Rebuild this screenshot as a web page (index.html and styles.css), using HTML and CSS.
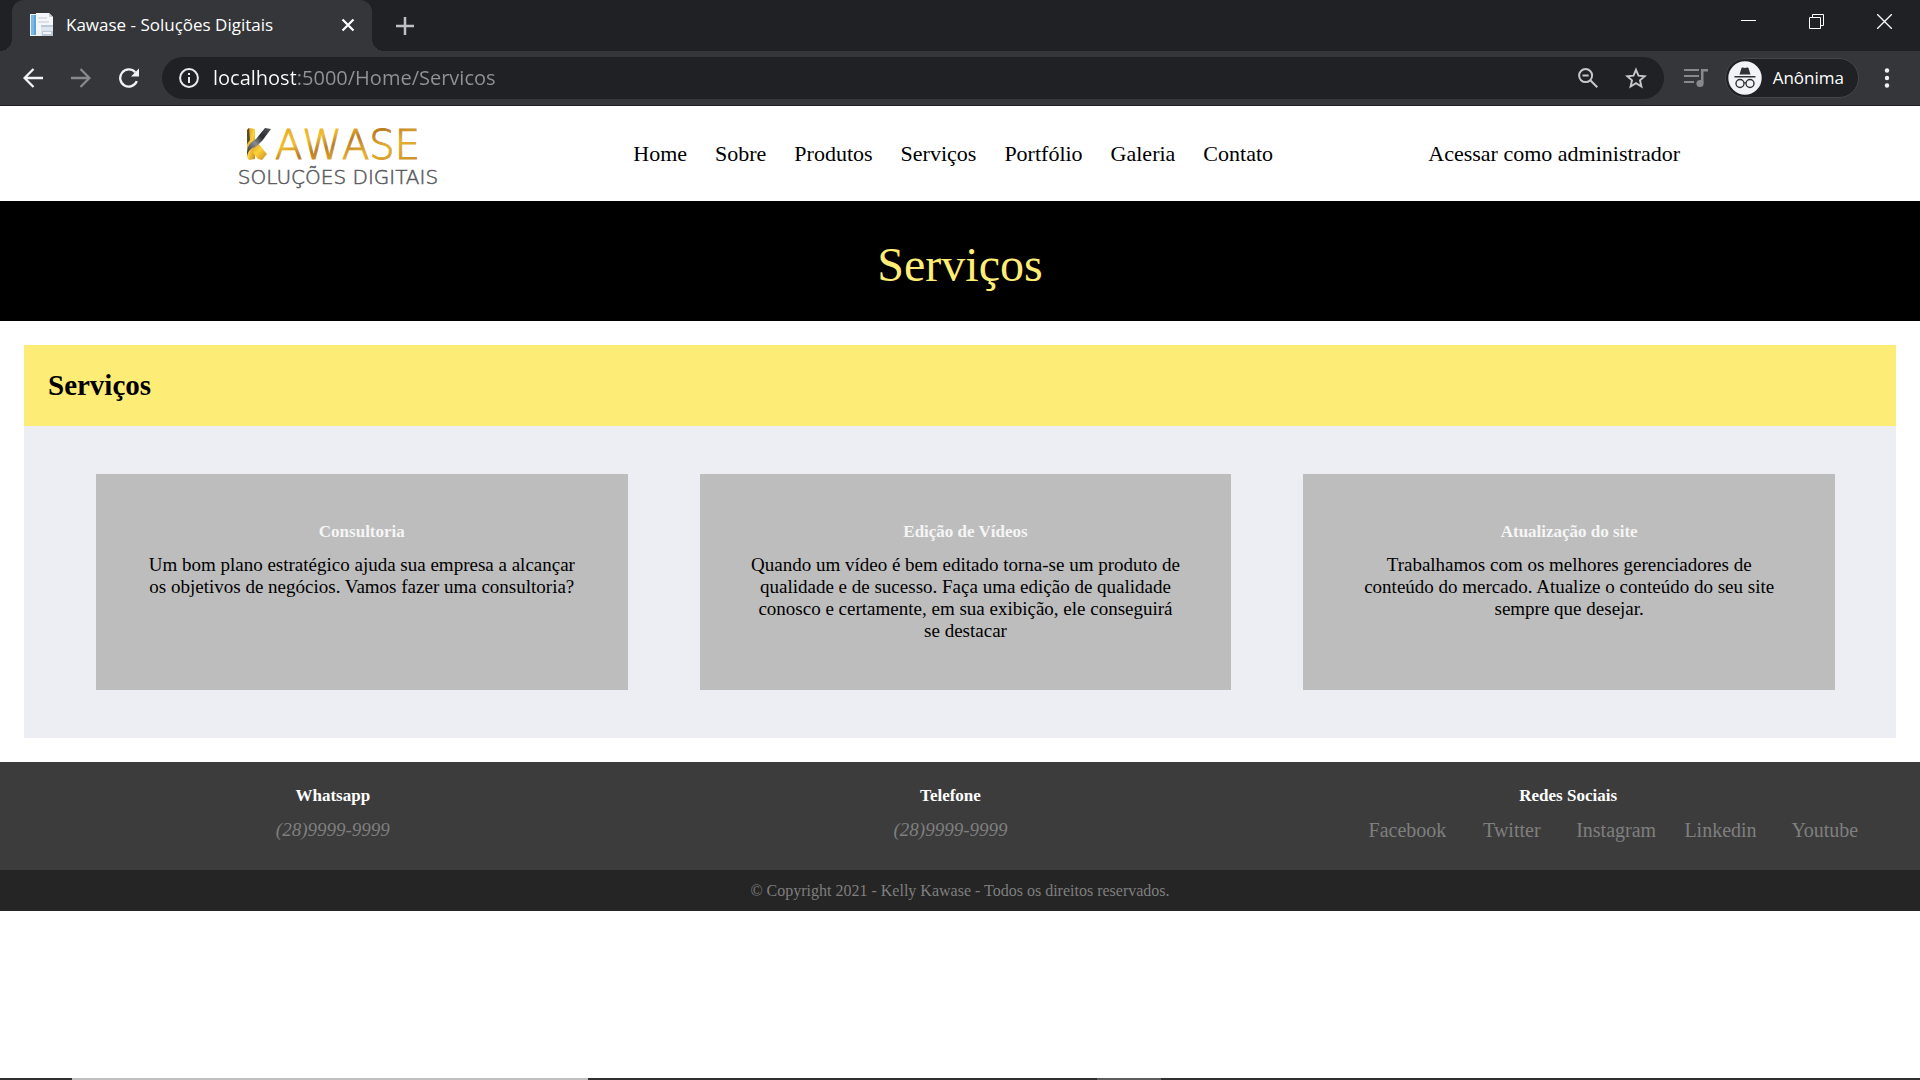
FILE: index.html
```
<!DOCTYPE html>
<html lang="pt-BR">
<head>
<meta charset="utf-8">
<title>Kawase - Soluções Digitais</title>
<link rel="stylesheet" href="styles.css">
</head>
<body>
<div class="browser">
  <div class="tabstrip">
    <div class="tab">
      <svg class="favicon" width="24" height="24" viewBox="0 0 24 24" aria-hidden="true">
        <path d="M0 1h19l3 3v19H0z" fill="#eef1f6"/>
        <path d="M1 2h5v20H1z" fill="#5fa3d3"/>
        <path d="M1 2h3v20H1z" fill="#78bce6"/>
        <path d="M6 0h13l4 4v14H6z" fill="#f5f6f9"/>
        <path d="M8 4h9v2H8zM8 8h11v2H8z" fill="#dce0e8"/>
        <path d="M19 0v4h4z" fill="#c6ccd8"/>
        <path d="M11 12h12v11H11z" fill="#dfe5ee"/>
        <path d="M11 12h12v2H11zM12 18h11v5H12z" fill="#bcc7d8"/>
        <path d="M13 19h8v2h-8z" fill="#f3f6fa"/>
      </svg>
      <span class="tab-title">Kawase - Soluções Digitais</span>
      <button class="icon-btn tab-close" aria-label="Fechar guia"><svg width="14" height="14" viewBox="0 0 14 14"><path d="M1.500 1.500l11 11M12.500 1.500l-11 11" stroke="#fff" stroke-width="2.200"/></svg></button>
    </div>
    <button class="icon-btn new-tab" aria-label="Nova guia"><svg width="18" height="18" viewBox="0 0 18 18"><path d="M9 0v18M0 9h18" stroke="#bdc1c6" stroke-width="2.500"/></svg></button>
    <div class="window-controls">
      <button class="icon-btn" aria-label="Minimizar"><svg width="15" height="15" viewBox="0 0 15 15"><path d="M0 6.500h15" stroke="#fff"/></svg></button>
      <button class="icon-btn" aria-label="Restaurar"><svg width="15" height="15" viewBox="0 0 15 15" fill="none" stroke="#fff"><path d="M.5 3.500h11v11H.5zM3.500 3.500v-3h11v11h-3"/></svg></button>
      <button class="icon-btn" aria-label="Fechar"><svg width="15" height="15" viewBox="0 0 15 15"><path d="M0 0l15 15M15 0L0 15" stroke="#fff" stroke-width="1.300"/></svg></button>
    </div>
  </div>
  <div class="toolbar">
    <div class="nav-buttons">
      <button class="icon-btn" aria-label="Voltar"><svg width="20" height="20" viewBox="0 0 20 20" fill="none" stroke="#f1f3f4" stroke-width="2.300"><path d="M20 10H2M10.500 1L1.600 10l8.900 9"/></svg></button>
      <button class="icon-btn" aria-label="Avançar"><svg width="20" height="20" viewBox="0 0 20 20" fill="none" stroke="#87898d" stroke-width="2.300"><path d="M0 10h18M9.500 1l8.900 9-8.900 9"/></svg></button>
      <button class="icon-btn" aria-label="Recarregar"><svg width="20" height="20" viewBox="0 0 20 20"><path d="M17.800 13.200A8.600 8.600 0 1 1 16.200 4.300" fill="none" stroke="#f1f3f4" stroke-width="2.300"/><path d="M20 .5V8.500h-8z" fill="#f1f3f4"/></svg></button>
    </div>
    <div class="omnibox">
      <svg width="20" height="20" viewBox="0 0 20 20" aria-hidden="true"><circle cx="10" cy="10" r="8.900" fill="none" stroke="#e8eaed" stroke-width="2"/><path d="M9 5h2v2H9zM9 9h2v6H9z" fill="#e8eaed"/></svg>
      <input class="url" type="text" aria-label="Endereço" value="localhost:5000/Home/Servicos">
      <button class="icon-btn" aria-label="Zoom"><svg width="20" height="20" viewBox="0 0 20 20" fill="none" stroke="#c5c7ca" stroke-width="2"><circle cx="7.600" cy="7.600" r="6.500"/><path d="M4.500 7.600h6.200M12.300 12.300l7 7"/></svg></button>
      <button class="icon-btn" aria-label="Favoritar"><svg width="22" height="22" viewBox="0 0 22 22" fill="none" stroke="#c5c7ca" stroke-width="1.900"><path d="M11 2.800l2.500 5.900 6.200.5-4.700 4.100 1.400 6.200L11 16.200l-5.400 3.300L7 13.300 2.300 9.200l6.200-.5z"/></svg></button>
    </div>
    <button class="icon-btn media" aria-label="Mídia"><svg width="24" height="20" viewBox="0 0 24 20" fill="#87898d"><path d="M0 1h15v2H0zM0 7h15v2H0zM0 13h10v2H0zM17 1h7v2.500h-4.500V15H17z"/><circle cx="16" cy="15.500" r="3.600"/></svg></button>
    <button class="profile">
      <svg width="34" height="34" viewBox="0 0 34 34" aria-hidden="true"><circle cx="17" cy="17" r="16.700" fill="#f1f3f4"/><path d="M11.500 13.500l2-6.500q.4-.9 1.500-.5 2 .8 4 0 1.100-.4 1.500.5l2 6.500zM6.500 15h21v1.500h-21z" fill="#303236"/><g fill="none" stroke="#303236" stroke-width="1.400"><circle cx="12" cy="22.500" r="4"/><circle cx="22" cy="22.500" r="4"/><path d="M16 22q1-.8 2 0"/></g></svg>
      <span>Anônima</span>
    </button>
    <button class="icon-btn" aria-label="Menu"><svg width="6" height="20" viewBox="0 0 6 20" fill="#f1f3f4"><circle cx="3" cy="2.500" r="2.200"/><circle cx="3" cy="10" r="2.200"/><circle cx="3" cy="17.500" r="2.200"/></svg></button>
  </div>
</div>

<header class="site-header">
  <a class="logo" href="#" aria-label="Kawase Soluções Digitais">
    <svg width="280" height="90" viewBox="0 0 280 90">
      <defs>
        <linearGradient id="gold" x1="0" y1="0" x2="1" y2="1"><stop offset="0" stop-color="#e3a21c"/><stop offset=".3" stop-color="#f0bd2b"/><stop offset=".45" stop-color="#b97a22"/><stop offset=".65" stop-color="#e5b02c"/><stop offset="1" stop-color="#c1832a"/></linearGradient>
        <linearGradient id="ribbon" x1="0" y1="0" x2="1" y2="1"><stop offset="0" stop-color="#c98d1f"/><stop offset=".5" stop-color="#ffd23c"/><stop offset="1" stop-color="#c58a20"/></linearGradient>
        <linearGradient id="steel" x1="0" y1="1" x2="1" y2="0"><stop offset="0" stop-color="#2b2c30"/><stop offset=".4" stop-color="#8a8b90"/><stop offset=".65" stop-color="#2b2c30"/><stop offset="1" stop-color="#55565b"/></linearGradient>
      </defs>
      <path d="M49 21l2-2 6 1v30l-6 1-2-3z" fill="url(#ribbon)"/>
      <path d="M54 36l5-3 10 12-5 6-4-1-8-10z" fill="url(#ribbon)"/>
      <path d="M49 21l2-2 1 12-3 4z" fill="#5a4a2c"/>
      <path d="M49 43q0-8 9-13l9-11 6 1-9 12q-5 6-10 7-4 3-5 8z" fill="url(#steel)"/>
      <text x="77" y="50" class="logo-name" fill="url(#gold)">AWASE</text>
      <text x="140" y="75" class="logo-tag" text-anchor="middle">SOLUÇÕES DIGITAIS</text>
    </svg>
  </a>
  <nav class="main-nav">
    <a href="#">Home</a><a href="#">Sobre</a><a href="#">Produtos</a><a href="#">Serviços</a><a href="#">Portfólio</a><a href="#">Galeria</a><a href="#">Contato</a>
  </nav>
  <a class="admin-link" href="#">Acessar como administrador</a>
</header>

<div class="banner"><h1>Serviços</h1></div>

<main class="services">
  <h2 class="services-title">Serviços</h2>
  <div class="cards">
    <article class="card">
      <h3>Consultoria</h3>
      <p>Um bom plano estratégico ajuda sua empresa a alcançar os objetivos de negócios. Vamos fazer uma consultoria?</p>
    </article>
    <article class="card">
      <h3>Edição de Vídeos</h3>
      <p>Quando um vídeo é bem editado torna-se um produto de qualidade e de sucesso. Faça uma edição de qualidade conosco e certamente, em sua exibição, ele conseguirá se destacar</p>
    </article>
    <article class="card">
      <h3>Atualização do site</h3>
      <p>Trabalhamos com os melhores gerenciadores de conteúdo do mercado. Atualize o conteúdo do seu site sempre que desejar.</p>
    </article>
  </div>
</main>

<footer>
  <div class="contacts">
    <div class="contact"><h4>Whatsapp</h4><address>(28)9999-9999</address></div>
    <div class="contact"><h4>Telefone</h4><address>(28)9999-9999</address></div>
    <div class="contact"><h4>Redes Sociais</h4>
      <ul class="social">
        <li><a href="#">Facebook</a></li><li><a href="#">Twitter</a></li><li><a href="#">Instagram</a></li><li><a href="#">Linkedin</a></li><li><a href="#">Youtube</a></li>
      </ul>
    </div>
  </div>
  <p class="copyright">© Copyright 2021 - Kelly Kawase - Todos os direitos reservados.</p>
</footer>

<div class="taskbar"><span class="task-search"></span><span class="task-app"></span></div>
</body>
</html>
```
FILE: styles.css
```
* { box-sizing: border-box; margin: 0; padding: 0; }
body {
  min-height: 100vh;
  display: flex;
  flex-direction: column;
  background: #fff;
  color: #000;
  font: 19px/22px "Liberation Serif", "Times New Roman", serif;
}
a { color: inherit; text-decoration: none; }
button { border: 0; background: none; color: inherit; font: inherit; }
svg { display: block; flex: none; }
.icon-btn { flex: none; }

/* Browser frame */
.browser {
  background: #35363a;
  border-bottom: 1px solid #202124;
  color: #fff;
  font: 17px/24px "Open Sans", "Noto Sans", sans-serif;
}
.tabstrip { display: flex; height: 51px; background: #202124; padding-left: 12px; }
.tab {
  display: flex;
  align-items: center;
  width: 360px;
  padding: 0 17px 2px 18px;
  background: #35363a;
  border-radius: 12px 12px 0 0;
  position: relative;
}
.tab::before, .tab::after {
  content: "";
  position: absolute;
  bottom: 0;
  width: 12px;
  height: 12px;
}
.tab::before { left: -12px; background: radial-gradient(circle at 0 0, #202124 12px, #35363a 12px); }
.tab::after { right: -12px; background: radial-gradient(circle at 100% 0, #202124 12px, #35363a 12px); }
.tab-title { flex: 1; padding-left: 12px; white-space: nowrap; }
.new-tab { padding: 0 24px; }
.window-controls { display: flex; align-items: center; gap: 53px; height: 42px; margin-left: auto; padding-right: 28px; }
.toolbar { display: flex; align-items: center; height: 54px; padding: 0 30px 0 23px; }
.nav-buttons { display: flex; gap: 28px; padding-right: 23px; }
.omnibox {
  flex: 1;
  display: flex;
  align-items: center;
  gap: 27px;
  height: 42px;
  padding: 0 17px;
  border-radius: 21px;
  background: #202124;
}
.url {
  flex: 1;
  min-width: 0;
  margin-left: -13px;
  border: 0;
  outline: 0;
  font: 20px/30px "Open Sans", "Noto Sans", sans-serif;
  background: linear-gradient(to right, #fff 83px, #909398 83px);
  background-clip: text;
  color: transparent;
}
.media { padding: 0 17px 0 20px; }
.profile {
  display: flex;
  align-items: center;
  gap: 11px;
  height: 40px;
  margin-right: 25px;
  padding: 0 14px 0 2px;
  border: 1px solid #45464a;
  border-radius: 20px;
  background: #202124;
}

/* Site header */
.site-header {
  display: flex;
  align-items: center;
  justify-content: space-between;
  height: 95px;
  padding: 0 240px 0 198px;
  font-size: 22px;
  line-height: 26px;
}
.logo-name { font: 200 40px "DejaVu Sans", "DejaVu Sans Light", sans-serif; font-kerning: none; stroke: url(#gold); stroke-width: 1px; }
.logo-tag { font: 200 20px "DejaVu Sans", "DejaVu Sans Light", sans-serif; fill: #58595d; stroke: #58595d; stroke-width: .5px; }
.main-nav { display: flex; gap: 28px; }

.banner { background: #000; color: #ffed75; text-align: center; padding: 37px 0 29px; }
.banner h1 { font-size: 48px; line-height: 54px; font-weight: 400; }

/* Services */
.services { margin: 24px; background: #edeef4; }
.services-title { background: #fded76; padding: 24px; font-size: 29px; line-height: 33px; }
.cards { display: grid; grid-template-columns: repeat(3, 1fr); gap: 72px; padding: 48px 61px 48px 72px; }
.card { min-height: 216px; padding: 48px 50px; background: #bdbdbd; text-align: center; }
.card h3, .contact h4 { color: #f5f5f5; font-size: 17px; line-height: 19px; margin-bottom: 13px; }

/* Footer */
.contacts { display: grid; grid-template-columns: repeat(3, 1fr); padding: 24px 43px 29px 24px; background: #3c3c3c; color: #7f7f7f; text-align: center; }
.contact h4 { color: #fff; margin-bottom: 14px; }
.social { display: grid; grid-template-columns: repeat(5, 1fr); padding-left: 96px; list-style: none; font-size: 20px; }
.copyright { padding: 12px 0 11px; background: #252525; color: #7f7f7f; text-align: center; font-size: 16px; line-height: 18px; }

/* Edge of the system taskbar */
.taskbar { display: flex; height: 2px; margin-top: auto; padding-left: 72px; background: #303030; }
.task-search { width: 516px; background: #c0c0c0; }
.task-app { width: 64px; margin-left: 509px; background: #5c5c5c; }
```
